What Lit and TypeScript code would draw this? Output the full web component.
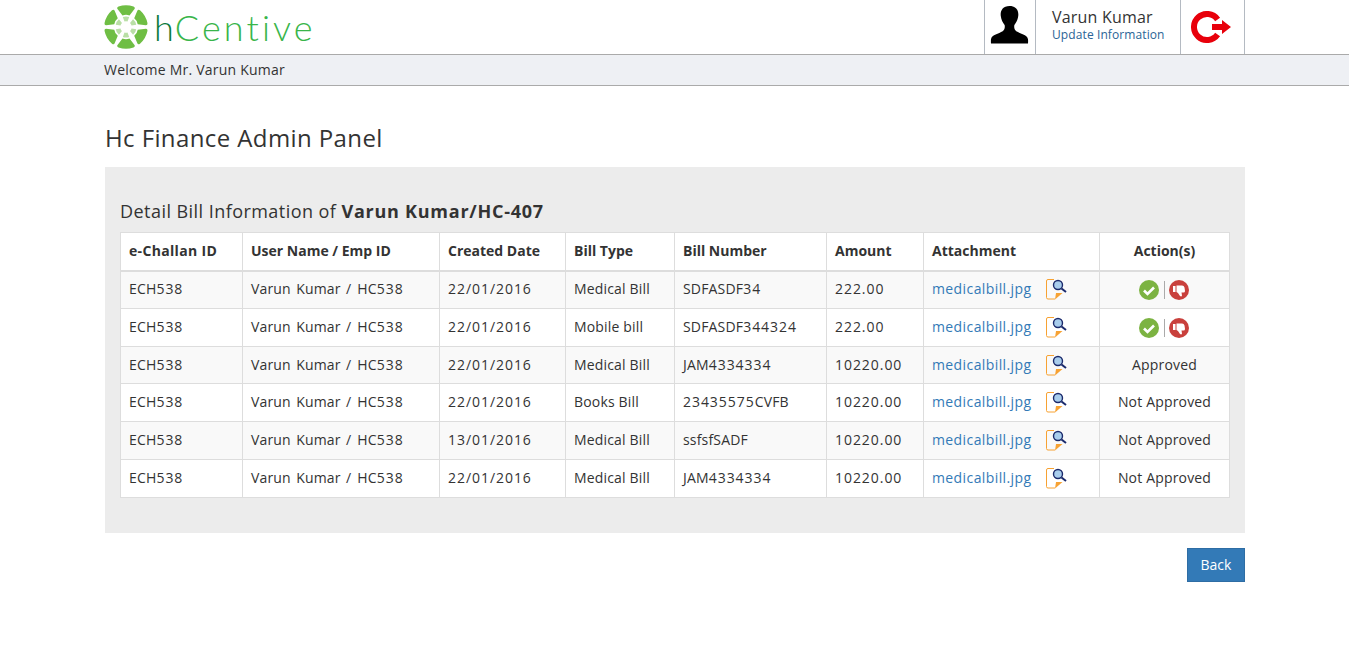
import { LitElement, html, css, svg } from 'lit';
import { customElement } from 'lit/decorators.js';

interface Bill {
  date: string;
  type: string;
  number: string;
  amount: string;
  status?: string;
}

const BILLS: Bill[] = [
  { date: '22/01/2016', type: 'Medical Bill', number: 'SDFASDF34', amount: '222.00' },
  { date: '22/01/2016', type: 'Mobile bill', number: 'SDFASDF344324', amount: '222.00' },
  { date: '22/01/2016', type: 'Medical Bill', number: 'JAM4334334', amount: '10220.00', status: 'Approved' },
  { date: '22/01/2016', type: 'Books Bill', number: '23435575CVFB', amount: '10220.00', status: 'Not Approved' },
  { date: '13/01/2016', type: 'Medical Bill', number: 'ssfsfSADF', amount: '10220.00', status: 'Not Approved' },
  { date: '22/01/2016', type: 'Medical Bill', number: 'JAM4334334', amount: '10220.00', status: 'Not Approved' },
];

const COLS = [122, 197, 126, 109, 152, 97, 176, 130];

// the reference's digits run wider than the letters, so numeric runs get their own spacing
const wide = (text: string) =>
  text.split(/([0-9/.]+)/).map((part, i) => (i % 2 ? html`<span class="d">${part}</span>` : part));

// one petal of the ring, rotated six times
const petal = (angle: number) => svg`
  <g transform="rotate(${angle} 22 22)">
    <path d="M14.500 1.500 Q22 -1 29.500 1.500 Q31.500 2.500 30.500 4 L25.500 10.500 Q22 9 18.500 10.500 L13.500 4 Q12.500 2.500 14.500 1.500Z" fill="#6fbe44"/>
    <path d="M18.800 12 Q22 10.800 25.200 12 L23.500 16.500 Q22 16 20.500 16.500Z" fill="#b9dfa6"/>
  </g>
`;

@customElement('app-root')
export class AppRoot extends LitElement {
  static styles = css`
    :host {
      display: block;
      font-family: 'Open Sans', sans-serif;
      font-size: 14px;
      color: #333;
      background: #fff;
      min-height: 662px;
    }

    .wrap {
      width: 1140px;
      margin-left: 105px;
    }

    .top {
      height: 54px;
      border-bottom: 1px solid #aaa;
    }

    .top .wrap {
      display: flex;
      justify-content: space-between;
      height: 54px;
    }

    .logo {
      display: flex;
      align-items: center;
      gap: 6px;
      margin-left: -1px;
    }

    .logo-text {
      font-family: 'Lato', sans-serif;
      font-weight: 300;
      font-size: 36px;
      letter-spacing: 3.100px;
      color: #39b54a;
      line-height: 54px;
    }

    .logo-text b {
      font-weight: 300;
      color: #0a7a3c;
      letter-spacing: 1px;
    }

    .user {
      display: flex;
    }

    .cell {
      border-left: 1px solid #b4bac2;
      box-sizing: border-box;
      display: flex;
      align-items: center;
    }

    .cell.avatar {
      width: 51px;
      justify-content: center;
      padding: 0 2px 4px 0;
    }

    .cell.name {
      width: 145px;
      padding: 0 0 4px 16px;
      flex-direction: column;
      align-items: flex-start;
      justify-content: center;
    }

    .name span {
      font-size: 16px;
      line-height: 19px;
      letter-spacing: 0.200px;
      color: #333;
    }

    .name a {
      font-size: 12px;
      line-height: 15px;
      letter-spacing: 0.100px;
      color: #2a6496;
    }

    .cell.logout {
      width: 65px;
      padding-left: 10px;
      border-right: 1px solid #b4bac2;
    }

    .bar {
      height: 30px;
      background: #eef0f4;
      border-bottom: 1px solid #aaa;
      line-height: 30px;
      letter-spacing: 0.220px;
    }

    .bar .wrap {
      margin-left: 104px;
    }

    h1 {
      font-weight: 400;
      font-size: 24px;
      line-height: 30px;
      letter-spacing: 0.400px;
      margin: 37px 0 14px;
      color: #333;
    }

    .panel {
      background: #ececec;
      padding: 30px 15px 35px;
      height: 366px;
      box-sizing: border-box;
    }

    h2 {
      font-weight: 400;
      font-size: 18px;
      line-height: 24px;
      letter-spacing: 0.450px;
      margin: 2px 0 9px;
      color: #333;
    }

    h2 b {
      letter-spacing: 0.750px;
    }

    table {
      table-layout: fixed;
      width: 1110px;
      border-collapse: collapse;
      background: #fff;
    }

    th,
    td {
      border: 1px solid #ddd;
      padding: 0 8px;
      text-align: left;
      height: 37.830px;
      box-sizing: border-box;
      white-space: nowrap;
    }

    td {
      letter-spacing: 0.170px;
      padding-bottom: 2px;
    }

    td.who {
      word-spacing: 1.500px;
    }

    th {
      border-bottom-width: 2px;
      font-weight: 700;
      height: 38px;
      padding-bottom: 2px;
    }

    th.first {
      letter-spacing: 0.330px;
    }

    tbody tr:nth-child(odd) {
      background: #f9f9f9;
    }

    .d {
      letter-spacing: 0.950px;
    }

    .center {
      text-align: center;
    }

    .file {
      display: flex;
      align-items: center;
      padding-top: 2px;
    }

    .file a {
      color: #337ab7;
      width: 114px;
      letter-spacing: 0.400px;
      margin-top: -2px;
    }

    .actions {
      display: flex;
      justify-content: center;
      align-items: center;
      gap: 4px;
      padding: 3px 2px 0 0;
    }

    .sep {
      width: 1px;
      height: 18px;
      margin-left: 1px;
      background: #aaa;
    }

    .foot {
      display: flex;
      justify-content: flex-end;
      margin-top: 15px;
    }

    .back {
      width: 58px;
      height: 34px;
      background: #337ab7;
      border: 1px solid #2e6da4;
      color: #fff;
      font: inherit;
      padding: 0 0 2px;
    }
  `;

  private renderFileIcon() {
    return html`<svg width="22" height="21" viewBox="0 0 22 21">
      <path d="M8 0.500H2Q0.500 0.500 0.500 2V18.500Q0.500 20 2 20H9" fill="none" stroke="#f7a233" stroke-width="1"/>
      <path d="M9 20.500 L10 14 H16.500Z" fill="#f7a233"/>
      <path d="M15.500 9.500 L20 13" stroke="#1b2a6b" stroke-width="2"/>
      <circle cx="12" cy="6" r="4.500" fill="#a9cdec" stroke="#1b2a6b" stroke-width="1.400"/>
    </svg>`;
  }

  private renderActions() {
    return html`<div class="actions">
      <svg width="20" height="20" viewBox="0 0 20 20">
        <circle cx="10" cy="10" r="10" fill="#7cb342"/>
        <path d="M5 10.500 L8.500 14 L15 7.500" fill="none" stroke="#fff" stroke-width="2.600"/>
      </svg>
      <span class="sep"></span>
      <svg width="20" height="20" viewBox="0 0 20 20">
        <circle cx="10" cy="10" r="10" fill="#c9403c"/>
        <path d="M4 6H6.500V12H4Z M7.500 5.500H13Q15 5.500 15.500 7.500L16 11Q16 12.500 14.500 12.500H12.500L13 15.500Q12.500 17 11 16L9 13L7.500 12Z" fill="#fff"/>
      </svg>
    </div>`;
  }

  render() {
    return html`
      <div class="top">
        <div class="wrap">
          <div class="logo">
            <svg width="44" height="44" viewBox="0 0 44 44">
              ${[0, 60, 120, 180, 240, 300].map((a) => petal(a))}
            </svg>
            <span class="logo-text"><b>h</b>Centive</span>
          </div>
          <div class="user">
            <div class="cell avatar">
              <svg width="39" height="38" viewBox="0 0 40 39">
                <path d="M20 0C13 0 10.500 5 11 10C11.500 14 13 17 15 19.500C15.500 22 15 24 13 26C9 28.500 2 29.500 1 34C0.800 36 1 38 1 38.500H39C39 38 39.200 36 39 34C38 29.500 31 28.500 27 26C25 24 24.500 22 25 19.500C27 17 28.500 14 29 10C29.500 5 27 0 20 0Z" fill="#000"/>
              </svg>
            </div>
            <div class="cell name">
              <span>Varun Kumar</span>
              <a>Update Information</a>
            </div>
            <div class="cell logout">
              <svg width="40" height="32" viewBox="0 0 40 32">
                <path d="M26.600 8.500A13 13 0 1 0 26.600 23.500" fill="none" stroke="#e8000b" stroke-width="6"/>
                <path d="M21 13H31V9L40 16L31 23V19H21Z" fill="#e8000b"/>
              </svg>
            </div>
          </div>
        </div>
      </div>
      <div class="bar"><div class="wrap">Welcome Mr. Varun Kumar</div></div>
      <div class="wrap">
        <h1>Hc Finance Admin Panel</h1>
        <div class="panel">
          <h2>Detail Bill Information of <b>Varun Kumar/HC-407</b></h2>
          <table>
            <colgroup>
              ${COLS.map((w) => html`<col style="width:${w}px" />`)}
            </colgroup>
            <thead>
              <tr>
                <th class="first">e-Challan ID</th>
                <th>User Name / Emp ID</th>
                <th>Created Date</th>
                <th>Bill Type</th>
                <th>Bill Number</th>
                <th>Amount</th>
                <th>Attachment</th>
                <th class="center">Action(s)</th>
              </tr>
            </thead>
            <tbody>
              ${BILLS.map(
                (b) => html`
                  <tr>
                    <td>${wide('ECH538')}</td>
                    <td class="who">${wide('Varun Kumar / HC538')}</td>
                    <td>${wide(b.date)}</td>
                    <td>${b.type}</td>
                    <td>${wide(b.number)}</td>
                    <td>${wide(b.amount)}</td>
                    <td>
                      <div class="file">
                        <a>medicalbill.jpg</a>
                        ${this.renderFileIcon()}
                      </div>
                    </td>
                    <td class="center">${b.status ?? this.renderActions()}</td>
                  </tr>
                `
              )}
            </tbody>
          </table>
        </div>
        <div class="foot"><button class="back">Back</button></div>
      </div>
    `;
  }
}
